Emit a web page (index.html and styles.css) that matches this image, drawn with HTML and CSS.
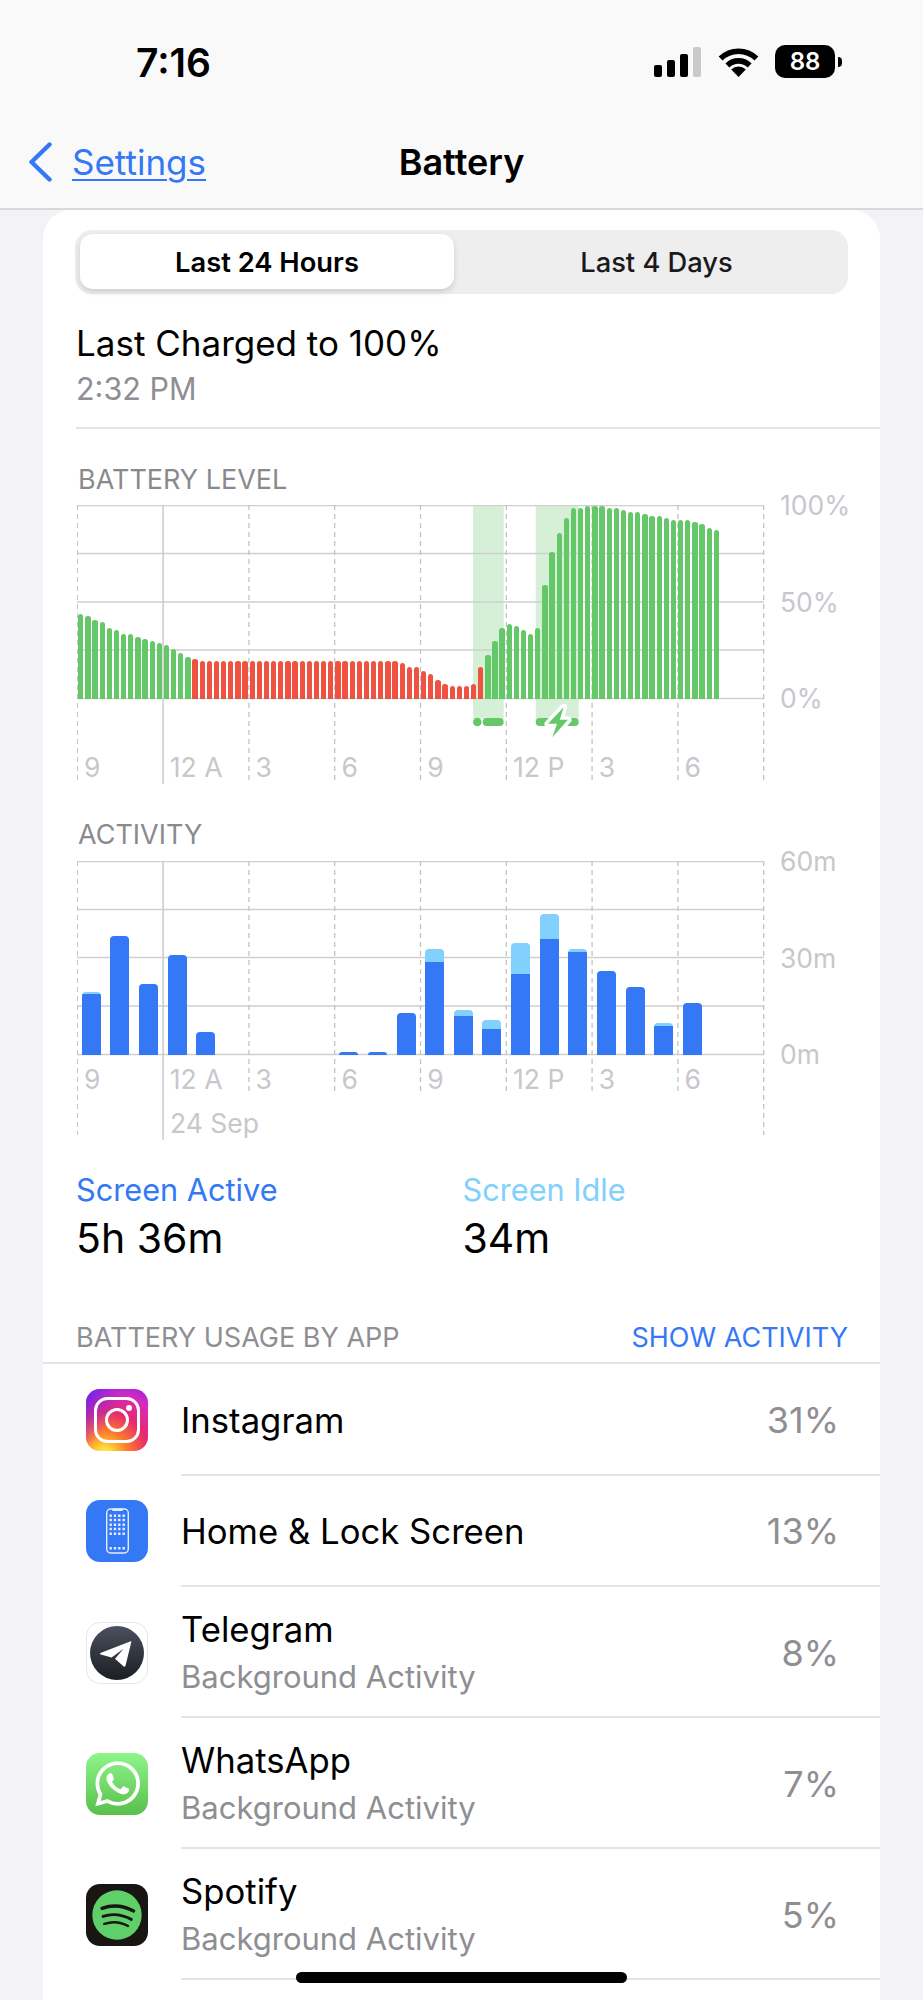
FILE: index.html
```html
<!DOCTYPE html>
<html lang="en">
<head>
<meta charset="utf-8">
<title>Battery</title>
<link rel="stylesheet" href="styles.css">
</head>
<body>
<header class="topbar">
  <div class="status">
    <span class="clock">7:16</span>
    <div class="status-icons">
      <div class="signal"><i class="s1"></i><i class="s2"></i><i class="s3"></i><i class="s4"></i></div>
      <svg class="wifi" viewBox="0 0 41 30" width="41" height="30"><path d="M2.6 11.6A25.5 25.5 0 0 1 38.4 11.6M9.4 18.4A15.8 15.8 0 0 1 31.6 18.4" fill="none" stroke="#000" stroke-width="5.6"/><path d="M20.5 30L13.2 22.6A10.4 10.4 0 0 1 27.8 22.6Z" fill="#000"/></svg>
      <div class="batt"><span class="batt-body">88</span><i class="batt-nub"></i></div>
    </div>
  </div>
  <nav class="navbar">
    <a class="back" href="#">
      <svg class="chev" viewBox="0 0 24 40" width="24" height="40"><path d="M21.5 2.5L3.5 20L21.5 37.5" fill="none" stroke="#3478f6" stroke-width="4.4" stroke-linecap="round" stroke-linejoin="round"/></svg>
      <span class="back-text">Settings</span>
    </a>
    <h1 class="title">Battery</h1>
  </nav>
</header>

<main class="card">
  <div class="segment">
    <div class="seg seg-on">Last 24 Hours</div>
    <div class="seg">Last 4 Days</div>
  </div>

  <div class="charged">
    <div class="charged-main">Last Charged to 100%</div>
    <div class="charged-sub">2:32 PM</div>
  </div>

  <section class="chart chart-battery">
    <h2 class="chart-title">BATTERY LEVEL</h2>
    <div class="chart-row">
      <div class="plot">
        <svg class="gridlines" viewBox="0 0 690 279" width="690" height="279">
          <rect class="band" x="396" y="0" width="30.7" height="214"/>
          <rect class="band" x="458.7" y="0" width="43" height="214"/>
          <path class="h" d="M0 .5H687M0 48.5H687M0 97H687M0 145H687M0 193.5H687"/>
          <path class="v" d="M.3 0V276M171.9 0V276M257.7 0V276M343.5 0V276M429.3 0V276M515.1 0V276M600.9 0V276M686.7 0V276"/>
          <path class="vs" d="M86.1 0V279"/>
          <circle class="pill" cx="400.3" cy="217" r="4.3"/>
          <rect class="pill" x="405.7" y="213" width="21" height="8" rx="4"/>
          <rect class="pill" x="458.7" y="213" width="43" height="8" rx="4"/>
          <path class="bolt" d="M486.7 202.2L471 218.8H480L475.4 232.2L491 214.8H482.7Z"/>
        </svg>
        <div class="bars">
          <i class="g" style="height:84.3px"></i><i class="g" style="height:82.7px"></i><i class="g" style="height:78.7px"></i><i class="g" style="height:76.7px"></i>
          <i class="g" style="height:71px"></i><i class="g" style="height:69px"></i><i class="g" style="height:65px"></i><i class="g" style="height:65px"></i>
          <i class="g" style="height:61.3px"></i><i class="g" style="height:59.3px"></i><i class="g" style="height:57.3px"></i><i class="g" style="height:55.3px"></i>
          <i class="g" style="height:53.7px"></i><i class="g" style="height:49.7px"></i><i class="g" style="height:45.7px"></i><i class="g" style="height:41.7px"></i>
          <i class="r" style="height:40px"></i>
          <i class="r" style="height:38px"></i><i class="r" style="height:38px"></i><i class="r" style="height:38px"></i><i class="r" style="height:38px"></i>
          <i class="r" style="height:38px"></i><i class="r" style="height:38px"></i><i class="r" style="height:38px"></i><i class="r" style="height:38px"></i>
          <i class="r" style="height:38px"></i><i class="r" style="height:38px"></i><i class="r" style="height:38px"></i><i class="r" style="height:38px"></i>
          <i class="r" style="height:38px"></i><i class="r" style="height:38px"></i><i class="r" style="height:38px"></i><i class="r" style="height:38px"></i>
          <i class="r" style="height:38px"></i><i class="r" style="height:38px"></i><i class="r" style="height:38px"></i><i class="r" style="height:38px"></i>
          <i class="r" style="height:38px"></i><i class="r" style="height:38px"></i><i class="r" style="height:38px"></i><i class="r" style="height:38px"></i>
          <i class="r" style="height:38px"></i><i class="r" style="height:38px"></i><i class="r" style="height:38px"></i><i class="r" style="height:38px"></i>
          <i class="r" style="height:36px"></i><i class="r" style="height:32px"></i><i class="r" style="height:32px"></i><i class="r" style="height:28px"></i>
          <i class="r" style="height:24.3px"></i><i class="r" style="height:18.7px"></i><i class="r" style="height:14.7px"></i><i class="r" style="height:12.7px"></i>
          <i class="r" style="height:12.7px"></i><i class="r" style="height:12.7px"></i><i class="r" style="height:14.7px"></i><i class="r" style="height:32px"></i>
          <i class="g" style="height:43.7px"></i><i class="g" style="height:57.3px"></i><i class="g" style="height:70.7px"></i><i class="g" style="height:74.7px"></i>
          <i class="g" style="height:72.7px"></i><i class="g" style="height:68.7px"></i><i class="g" style="height:65px"></i><i class="g" style="height:70.7px"></i>
          <i class="g" style="height:113.3px"></i><i class="g" style="height:146.3px"></i><i class="g" style="height:165.3px"></i><i class="g" style="height:180.7px"></i>
          <i class="g" style="height:190.3px"></i><i class="g" style="height:190.3px"></i><i class="g" style="height:192.7px"></i><i class="g" style="height:192.7px"></i>
          <i class="g" style="height:192.7px"></i><i class="g" style="height:190.3px"></i><i class="g" style="height:190.3px"></i><i class="g" style="height:188.3px"></i>
          <i class="g" style="height:186.7px"></i><i class="g" style="height:186.7px"></i><i class="g" style="height:184.7px"></i><i class="g" style="height:182.7px"></i>
          <i class="g" style="height:182.7px"></i><i class="g" style="height:180.7px"></i><i class="g" style="height:178.7px"></i><i class="g" style="height:178.7px"></i>
          <i class="g" style="height:178.7px"></i><i class="g" style="height:176.7px"></i><i class="g" style="height:174.7px"></i><i class="g" style="height:171px"></i>
          <i class="g" style="height:169px"></i>
        </div>
        <div class="ticks ticks-battery">
          <span>9</span><span>12 A</span><span>3</span><span>6</span><span>9</span><span>12 P</span><span>3</span><span>6</span>
        </div>
      </div>
      <div class="yaxis"><span>100%</span><span>50%</span><span>0%</span></div>
    </div>
  </section>

  <section class="chart chart-activity">
    <h2 class="chart-title">ACTIVITY</h2>
    <div class="chart-row">
      <div class="plot">
        <svg class="gridlines" viewBox="0 0 690 279" width="690" height="279">
          <path class="h" d="M0 .5H687M0 48.5H687M0 96.5H687M0 145H687M0 193.5H687"/>
          <path class="v" d="M.3 0V274M686.7 0V274M171.9 0V231M257.7 0V231M343.5 0V231M429.3 0V231M515.1 0V231M600.9 0V231"/>
          <path class="vs" d="M86.1 0V279"/>
        </svg>
        <div class="cols">
          <div class="col"><b style="height:1.6px"></b><i style="height:60.7px"></i></div>
          <div class="col"><i style="height:118.7px"></i></div>
          <div class="col"><i style="height:71px"></i></div>
          <div class="col"><i style="height:99.3px"></i></div>
          <div class="col"><i style="height:22.3px"></i></div>
          <div class="col"></div>
          <div class="col"></div>
          <div class="col"></div>
          <div class="col"></div>
          <div class="col"><i style="height:3px"></i></div>
          <div class="col"><i style="height:3px"></i></div>
          <div class="col"><i style="height:41.7px"></i></div>
          <div class="col"><b style="height:12.3px"></b><i style="height:93px"></i></div>
          <div class="col"><b style="height:6.3px"></b><i style="height:38.7px"></i></div>
          <div class="col"><b style="height:9px"></b><i style="height:26px"></i></div>
          <div class="col"><b style="height:31.3px"></b><i style="height:80.3px"></i></div>
          <div class="col"><b style="height:25px"></b><i style="height:116px"></i></div>
          <div class="col"><b style="height:3px"></b><i style="height:103px"></i></div>
          <div class="col"><i style="height:83.7px"></i></div>
          <div class="col"><i style="height:67.3px"></i></div>
          <div class="col"><b style="height:3px"></b><i style="height:28.7px"></i></div>
          <div class="col"><i style="height:51.3px"></i></div>
        </div>
        <div class="ticks ticks-activity">
          <span>9</span><span>12 A</span><span>3</span><span>6</span><span>9</span><span>12 P</span><span>3</span><span>6</span>
        </div>
        <div class="date">24 Sep</div>
      </div>
      <div class="yaxis"><span>60m</span><span>30m</span><span>0m</span></div>
    </div>
  </section>

  <section class="totals">
    <div class="total">
      <div class="total-label total-active">Screen Active</div>
      <div class="total-value">5h 36m</div>
    </div>
    <div class="total">
      <div class="total-label total-idle">Screen Idle</div>
      <div class="total-value">34m</div>
    </div>
  </section>

  <div class="usage-head">
    <span class="usage-title">BATTERY USAGE BY APP</span>
    <a class="usage-link" href="#">SHOW ACTIVITY</a>
  </div>

  <ul class="apps">
    <li class="app app-short">
      <svg class="icon" viewBox="0 0 62 62">
        <defs>
          <radialGradient id="igA" cx="30%" cy="107%" r="130%"><stop offset="0" stop-color="#fdf497"/><stop offset=".1" stop-color="#fdd835"/><stop offset=".3" stop-color="#fd7a2d"/><stop offset=".55" stop-color="#e6296e"/><stop offset=".8" stop-color="#d62ac0"/><stop offset="1" stop-color="#8a25e0"/></radialGradient>
          <linearGradient id="igB" x1="0" y1="0" x2=".5" y2=".4"><stop offset="0" stop-color="#5b24f0"/><stop offset="1" stop-color="#a626e0" stop-opacity="0"/></linearGradient>
        </defs>
        <rect width="62" height="62" rx="14" fill="url(#igA)"/>
        <rect width="62" height="62" rx="14" fill="url(#igB)"/>
        <rect x="9.5" y="9.5" width="43" height="43" rx="12" fill="none" stroke="#fff" stroke-width="3"/>
        <circle cx="31" cy="31" r="10.5" fill="none" stroke="#fff" stroke-width="3"/>
        <circle cx="43" cy="19" r="3" fill="#fff"/>
      </svg>
      <div class="app-text"><div class="app-name">Instagram</div></div>
      <div class="app-pct">31%</div>
    </li>
    <li class="app app-short">
      <svg class="icon" viewBox="0 0 62 62">
        <rect width="62" height="62" rx="14" fill="#3478f6"/>
        <rect x="20.7" y="9" width="21.6" height="44" rx="4" fill="none" stroke="#e4edfd" stroke-width="1.4"/>
        <rect x="26" y="8.5" width="11" height="2.4" rx="1.2" fill="#e4edfd"/>
        <path class="home-dots" d="M24.7 15.7h0M29 15.7h0M33.3 15.7h0M37.7 15.7h0M24.7 20h0M29 20h0M33.3 20h0M37.7 20h0M24.7 24.7h0M29 24.7h0M33.3 24.7h0M37.7 24.7h0M24.7 29h0M29 29h0M33.3 29h0M37.7 29h0M24.7 33.7h0M29 33.7h0M33.3 33.7h0M37.7 33.7h0M24.7 48.3h0M29 48.3h0M33.3 48.3h0M37.7 48.3h0"/>
      </svg>
      <div class="app-text"><div class="app-name">Home &amp; Lock Screen</div></div>
      <div class="app-pct">13%</div>
    </li>
    <li class="app">
      <svg class="icon" viewBox="0 0 62 62">
        <defs><linearGradient id="tg" x1="0" y1="0" x2="0" y2="1"><stop offset="0" stop-color="#4b505e"/><stop offset="1" stop-color="#1b1e22"/></linearGradient></defs>
        <rect x=".5" y=".5" width="61" height="61" rx="13.5" fill="#fff" stroke="#e6e6ea"/>
        <circle cx="31" cy="31" r="27" fill="url(#tg)"/>
        <path d="M44.7 19.3L14.4 30.9Q13.4 31.6 14.6 32.4L25.6 35.4L37.6 26.8L29 36.8L37.7 44.6Q39 45.3 39.5 43.8L45.3 20Q45.4 19 44.7 19.3Z" fill="#fff"/>
      </svg>
      <div class="app-text"><div class="app-name">Telegram</div><div class="app-sub">Background Activity</div></div>
      <div class="app-pct">8%</div>
    </li>
    <li class="app">
      <svg class="icon" viewBox="0 0 62 62">
        <defs><linearGradient id="wa" x1="0" y1="0" x2="0" y2="1"><stop offset="0" stop-color="#8df58a"/><stop offset="1" stop-color="#59bf4d"/></linearGradient></defs>
        <rect width="62" height="62" rx="14" fill="url(#wa)"/>
        <g transform="translate(9.2 8.3) scale(1.87)"><path fill="#fff" d="M17.472 14.382c-.297-.149-1.758-.867-2.03-.967-.273-.099-.471-.148-.67.15-.197.297-.767.966-.94 1.164-.173.199-.347.223-.644.075-.297-.15-1.255-.463-2.39-1.475-.883-.788-1.48-1.761-1.653-2.059-.173-.297-.018-.458.13-.606.134-.133.298-.347.446-.52.149-.174.198-.298.298-.497.099-.198.05-.371-.025-.52-.075-.149-.669-1.612-.916-2.207-.242-.579-.487-.5-.669-.51-.173-.008-.371-.01-.57-.01-.198 0-.52.074-.792.372-.272.297-1.04 1.016-1.04 2.479 0 1.462 1.065 2.875 1.213 3.074.149.198 2.096 3.2 5.077 4.487.709.306 1.262.489 1.694.625.712.227 1.36.195 1.871.118.571-.085 1.758-.719 2.006-1.413.248-.694.248-1.289.173-1.413-.074-.124-.272-.198-.57-.347m-5.421 7.403h-.004a9.87 9.87 0 01-5.031-1.378l-.361-.214-3.741.982.998-3.648-.235-.374a9.86 9.86 0 01-1.51-5.26c.001-5.45 4.436-9.884 9.888-9.884 2.64 0 5.122 1.03 6.988 2.898a9.825 9.825 0 012.893 6.994c-.003 5.45-4.437 9.884-9.885 9.884m8.413-18.297A11.815 11.815 0 0012.05 0C5.495 0 .16 5.335.157 11.892c0 2.096.547 4.142 1.588 5.945L.057 24l6.305-1.654a11.882 11.882 0 005.683 1.448h.005c6.554 0 11.89-5.335 11.893-11.893a11.821 11.821 0 00-3.48-8.413z"/></g>
      </svg>
      <div class="app-text"><div class="app-name">WhatsApp</div><div class="app-sub">Background Activity</div></div>
      <div class="app-pct">7%</div>
    </li>
    <li class="app">
      <svg class="icon" viewBox="0 0 62 62">
        <rect width="62" height="62" rx="14" fill="#191513"/>
        <circle cx="31" cy="31" r="24.7" fill="#5fd069"/>
        <path d="M16 24.3Q32 18.6 47.6 27" fill="none" stroke="#191513" stroke-width="3.4" stroke-linecap="round"/>
        <path d="M17 32.4Q31 27.8 45.3 35.4" fill="none" stroke="#191513" stroke-width="2.9" stroke-linecap="round"/>
        <path d="M18.3 39.8Q31 35.8 42 42" fill="none" stroke="#191513" stroke-width="2.4" stroke-linecap="round"/>
      </svg>
      <div class="app-text"><div class="app-name">Spotify</div><div class="app-sub">Background Activity</div></div>
      <div class="app-pct">5%</div>
    </li>
  </ul>
</main>
<div class="home-indicator"></div>
</body>
</html>
```

FILE: styles.css
```css
* { box-sizing: border-box; }
html, body { margin: 0; padding: 0; }
body {
  width: 923px;
  height: 2000px;
  overflow: hidden;
  position: relative;
  background: #f2f2f7;
  color: #000;
  font-family: Inter, "Liberation Sans", sans-serif;
}

.topbar {
  height: 210px;
  background: #f9f9fa;
  border-bottom: 2px solid #d9d9db;
}
.status {
  height: 120px;
  display: flex;
  justify-content: space-between;
  padding: 40px 81px 0 136px;
}
.clock { font-size: 39px; font-weight: 600; line-height: 46px; }
.status-icons { display: flex; align-items: flex-start; padding-top: 5px; }
.signal { display: flex; align-items: flex-end; gap: 5px; height: 30px; margin-top: 2px; margin-right: 17px; }
.signal i { display: block; width: 8px; border-radius: 2px; background: #000; }
.s1 { height: 12px; }
.s2 { height: 17px; }
.s3 { height: 23px; }
.signal .s4 { height: 30px; background: #c9c9c9; }
.wifi { margin-top: 2px; margin-right: 16px; }
.batt { display: flex; align-items: center; }
.batt-body {
  width: 60px; height: 33px;
  background: #000; color: #fff;
  border-radius: 10px;
  font-size: 24px; font-weight: 600; line-height: 33px; text-align: center;
}
.batt-nub { width: 4px; height: 10px; margin-left: 3px; background: #000; border-radius: 0 5px 5px 0; }

.navbar { position: relative; height: 88px; display: flex; align-items: flex-start; }
.back { display: flex; align-items: flex-start; padding: 22px 0 0 28px; color: #3478f6; text-decoration: none; }
.chev { margin-right: 20px; }
.back-text { font-size: 35px; line-height: 40px; text-decoration: underline; text-underline-offset: 4px; text-decoration-thickness: 2px; }
.title {
  position: absolute; left: 0; right: 0; top: 22px; margin: 0;
  text-align: center; font-size: 36px; line-height: 40px; font-weight: 600;
}

.card {
  margin: 0 43px;
  height: 1790px;
  background: #fff;
  border-radius: 28px 28px 0 0;
  overflow: hidden;
}

.segment {
  margin: 20px 32px 0 32px;
  height: 64px;
  display: flex;
  padding: 4px 5px;
  background: #eeeeef;
  border-radius: 17px;
}
.seg { width: 374px; height: 55px; font-size: 27.3px; line-height: 57px; text-align: center; font-weight: 500; color: #1a1a1a; }
.seg-on { background: #fff; border-radius: 13px; font-weight: 600; color: #000; box-shadow: 0 3px 6px rgba(0,0,0,.14); }
.seg + .seg { flex: 1; padding-left: 16px; }

.charged { margin: 0 0 0 33px; padding-top: 27px; height: 135px; border-bottom: 2px solid #e4e4e6; }
.charged-main { font-size: 35px; line-height: 44px; }
.charged-sub { font-size: 30.5px; line-height: 40px; margin-top: 4px; color: #8e8e93; }

.chart-battery { padding-top: 35px; }
.chart-activity { padding-top: 35px; }
.chart-title { margin: 0 0 9px 35px; font-size: 27px; line-height: 32px; font-weight: 400; color: #8a8a8e; }
.chart-activity .chart-title { margin-bottom: 10px; }
.chart-row { display: flex; align-items: flex-start; margin-left: 34px; }
.plot { display: grid; width: 690px; height: 279px; flex: none; }
.plot > * { grid-area: 1 / 1; }
.gridlines { display: block; }
.band { fill: rgba(101, 200, 104, .27); }
.h { stroke: #d0d0d3; stroke-width: 1.4; fill: none; }
.v { stroke: #c4c4c8; stroke-width: 1.3; stroke-dasharray: 5 4; fill: none; }
.vs { stroke: #c8c8cb; stroke-width: 1.4; fill: none; }
.pill { fill: #65c868; }
.bolt { fill: #65c868; stroke: #fff; stroke-width: 7; stroke-linejoin: round; paint-order: stroke; }

.bars { display: flex; align-items: flex-end; gap: 1.85px; height: 193.5px; padding-left: 1.2px; align-self: start; }
.bars i { display: block; width: 5.3px; flex: none; border-radius: 2.6px 2.6px 0 0; }
.bars .g { background: #65c868; }
.bars .r { background: #ef5240; }

.cols { display: flex; align-items: flex-end; gap: 9.63px; height: 193.5px; padding-left: 4.7px; align-self: start; }
.col { width: 19px; flex: none; display: flex; flex-direction: column; border-radius: 4px 4px 0 0; overflow: hidden; }
.col i { display: block; background: #3478f6; }
.col b { display: block; background: #81d0fd; }

.ticks { display: flex; align-self: start; font-size: 26.5px; line-height: 30px; color: #c7c7cc; }
.ticks span { width: 85.8px; padding-left: 7px; flex: none; }
.ticks-battery { margin-top: 247px; }
.ticks-activity { margin-top: 203px; }
.date { align-self: start; margin: 247px 0 0 93px; font-size: 26.5px; line-height: 30px; color: #c7c7cc; }

.yaxis {
  display: flex; flex-direction: column; justify-content: space-between;
  height: 223px; margin: -15px 0 0 13px;
  font-size: 26.5px; line-height: 30px; color: #c7c7cc;
}

.totals { display: flex; margin: 31px 0 0 33px; }
.total { width: 386.5px; }
.total-label { font-size: 30.7px; line-height: 38px; }
.total-active { color: #3478f6; }
.total-idle { color: #81d0fd; }
.total-value { font-size: 41px; line-height: 48px; margin-top: 5px; }

.usage-head {
  display: flex; justify-content: space-between; align-items: baseline;
  margin-top: 60px; padding: 0 32px 0 33px;
  height: 40px;
  font-size: 27px; line-height: 32px;
}
.usage-title { color: #8e8e93; }
.usage-link { color: #3478f6; text-decoration: none; }

.apps { list-style: none; margin: 0; padding: 0; border-top: 2px solid #e4e4e6; }
.app { display: flex; align-items: center; height: 131px; padding: 0 41px 0 43px; position: relative; }
.app-short { height: 111.5px; }
.app::after { content: ""; position: absolute; left: 138px; right: 0; bottom: 0; height: 2px; background: #e4e4e6; }
.icon { width: 62px; height: 62px; flex: none; display: block; margin-right: 33px; }
.home-dots { stroke: #e4edfd; stroke-width: 2.4; stroke-linecap: square; fill: none; }
.app-text { flex: 1; }
.app-name { font-size: 34.7px; line-height: 44px; }
.app-sub { font-size: 31px; line-height: 38px; margin: 7.5px 0 2.5px; color: #8e8e93; }
.app-pct { font-size: 36px; color: #8e8e93; }

.home-indicator {
  position: absolute; left: 296px; top: 1972px;
  width: 331px; height: 11px;
  background: #000; border-radius: 6px;
}
```
